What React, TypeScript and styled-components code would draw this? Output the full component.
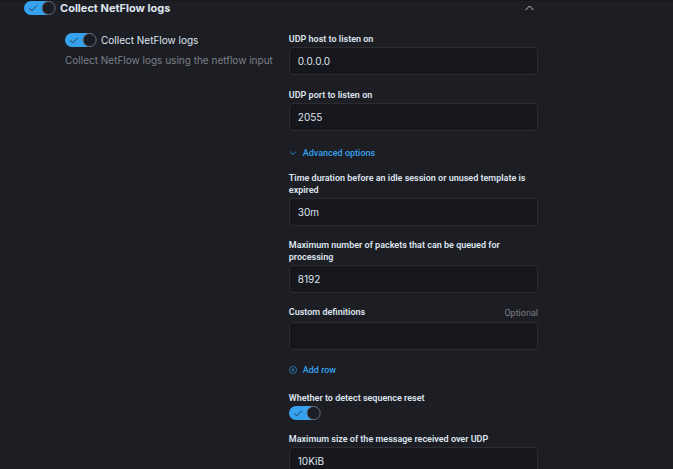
import React, { useId, useState } from "react";
import styled, { createGlobalStyle } from "styled-components";

const color = {
  page: "#1d1e24",
  field: "#16171c",
  border: "#2c2d33",
  text: "#dfe5ef",
  subdued: "#7b7e87",
  primary: "#36a2ef",
};

const bodyFont = `Inter, "Liberation Sans", sans-serif`;
const labelFont = `Roboto, "Liberation Sans", sans-serif`;

const GlobalStyle = createGlobalStyle`
  *, *::before, *::after { box-sizing: border-box; }
  body {
    margin: 0;
    overflow: hidden;
    background: ${color.page};
    color: ${color.text};
    font-family: ${bodyFont};
  }
  button, input { font: inherit; color: inherit; }
`;

const Page = styled.main`
  height: 100vh;
  overflow: hidden;
  padding: 0 135px 0 24px;
  border-top: 1px solid #17181c;
`;

const SectionHeader = styled.header`
  display: flex;
  align-items: center;
  gap: 4px;
  height: 14px;
`;

const SectionTitle = styled.h2`
  flex: 1;
  margin: 0;
  font-size: 11px;
  line-height: 14px;
  font-weight: 700;
`;

const CollapseButton = styled.button`
  display: flex;
  padding: 3px;
  border: 0;
  background: none;
`;

const SectionBody = styled.div`
  display: grid;
  grid-template-columns: 17fr 20fr;
  column-gap: 12px;
  padding: 18px 0 0 41px;
`;

const Stream = styled.section`
  font-size: 10px;
  line-height: 14px;
  white-space: nowrap;
`;

const StreamToggle = styled.div`
  display: flex;
  align-items: center;
  gap: 4px;
`;

const Description = styled.p`
  margin: 6px 0 0;
  color: ${color.subdued};
`;

const Form = styled.form`
  display: flex;
  flex-direction: column;
  gap: 13px;
  font-family: ${labelFont};
`;

const BasicFields = styled.div`
  display: flex;
  flex-direction: column;
  gap: 14px;
`;

const Field = styled.div`
  display: flex;
  flex-direction: column;
  gap: 2px;
`;

const FieldHeader = styled.div<{ $roomy?: boolean }>`
  display: flex;
  justify-content: space-between;
  align-items: center;
  min-height: ${(p) => (p.$roomy ? "14px" : "12px")};
`;

const Label = styled.label`
  align-self: flex-start;
  font-size: 9px;
  line-height: 12px;
  font-weight: 600;
`;

const Optional = styled.span`
  color: ${color.subdued};
  font-size: 9px;
  line-height: 12px;
`;

const TextInput = styled.input`
  width: 100%;
  height: 28px;
  padding: 0 8px;
  border: 1px solid ${color.border};
  border-radius: 4px;
  outline: 0;
  background: ${color.field};
  font-family: ${bodyFont};
  font-size: 10px;
`;

const LinkButton = styled.button<{ $placement: "above" | "below" }>`
  display: flex;
  align-items: center;
  align-self: flex-start;
  gap: 6px;
  margin: ${(p) => (p.$placement === "above" ? "3px 0 0" : "1px 0 3px")};
  padding: 0;
  border: 0;
  background: none;
  color: ${color.primary};
  font-size: 9px;
  font-weight: 500;
  line-height: 12px;
`;

const SwitchRoot = styled.span`
  display: grid;
  flex: none;
  width: 32px;
  height: 14px;

  & > * {
    grid-area: 1 / 1;
  }
`;

const SwitchInput = styled.input`
  width: 32px;
  height: 14px;
  margin: 0;
  opacity: 0;
`;

const SwitchArt = styled.svg`
  pointer-events: none;
`;

function Switch({ id }: { id: string }) {
  const [on, setOn] = useState(true);
  return (
    <SwitchRoot>
      <SwitchInput
        id={id}
        type="checkbox"
        role="switch"
        checked={on}
        onChange={(e) => setOn(e.target.checked)}
      />
      <SwitchArt width="32" height="14" viewBox="0 0 32 14" aria-hidden="true">
        <rect width="31" height="14" rx="7" fill={on ? color.primary : "#535966"} />
        {on && <path d="M5.2 7.4 7.8 9.9 12.8 4.6" fill="none" stroke="#1d3f5c" strokeWidth="1" />}
        <circle cx={on ? 24.6 : 7.4} cy="7" r="6.6" fill={color.page} stroke="#6a6e77" strokeWidth="0.9" />
      </SwitchArt>
    </SwitchRoot>
  );
}

function TextField({ label, value, optional }: { label: string; value: string; optional?: boolean }) {
  const id = useId();
  return (
    <Field>
      <FieldHeader $roomy={optional}>
        <Label htmlFor={id}>{label}</Label>
        {optional && <Optional>Optional</Optional>}
      </FieldHeader>
      <TextInput id={id} defaultValue={value} />
    </Field>
  );
}

export default function App() {
  return (
    <>
      <GlobalStyle />
      <Page>
        <SectionHeader>
          <Switch id="collect-all" />
          <SectionTitle>
            <label htmlFor="collect-all">Collect NetFlow logs</label>
          </SectionTitle>
          <CollapseButton type="button" aria-label="Collapse section">
            <svg width="11" height="8" viewBox="0 0 11 8" fill="none" stroke="#c5c9d1">
              <path d="M1.5 6 5.5 2 9.5 6" />
            </svg>
          </CollapseButton>
        </SectionHeader>
        <SectionBody>
          <Stream>
            <StreamToggle>
              <Switch id="collect-stream" />
              <label htmlFor="collect-stream">Collect NetFlow logs</label>
            </StreamToggle>
            <Description>Collect NetFlow logs using the netflow input</Description>
          </Stream>
          <Form>
            <BasicFields>
              <TextField label="UDP host to listen on" value="0.0.0.0" />
              <TextField label="UDP port to listen on" value="2055" />
            </BasicFields>
            <LinkButton type="button" $placement="above">
              <svg width="8" height="8" viewBox="0 0 8 8" fill="none" stroke={color.primary} strokeWidth="0.8">
                <path d="M1.2 2.8 4 5.4 6.8 2.8" />
              </svg>
              Advanced options
            </LinkButton>
            <TextField label="Time duration before an idle session or unused template is expired" value="30m" />
            <TextField label="Maximum number of packets that can be queued for processing" value="8192" />
            <TextField label="Custom definitions" value="" optional />
            <LinkButton type="button" $placement="below">
              <svg width="8" height="8" viewBox="0 0 8 8" fill="none" stroke={color.primary} strokeWidth="0.6">
                <circle cx="4" cy="4" r="3.6" />
                <path d="M4 2.2v3.6M2.2 4h3.6" />
              </svg>
              Add row
            </LinkButton>
            <Field>
              <Label htmlFor="sequence-reset">Whether to detect sequence reset</Label>
              <Switch id="sequence-reset" />
            </Field>
            <TextField label="Maximum size of the message received over UDP" value="10KiB" />
          </Form>
        </SectionBody>
      </Page>
    </>
  );
}
